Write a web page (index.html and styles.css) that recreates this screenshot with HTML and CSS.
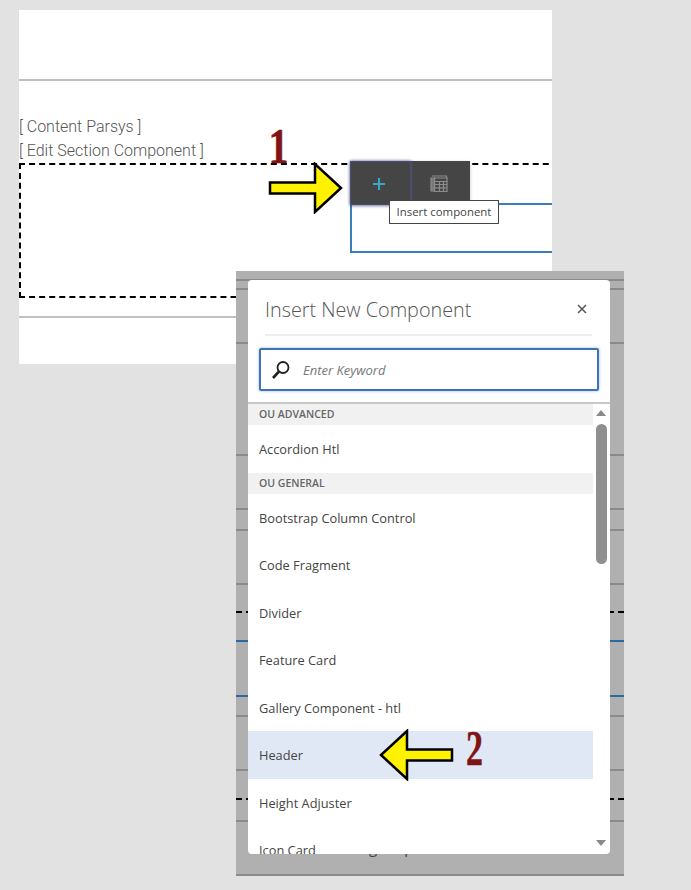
FILE: index.html
```html
<!DOCTYPE html>
<html lang="en">
<head>
<meta charset="utf-8">
<title>Insert New Component</title>
<link rel="stylesheet" href="styles.css">
</head>
<body>
<main class="card">
  <hr class="rule rule-top">
  <p class="label">[ Content Parsys ]</p>
  <p class="label">[ Edit Section Component ]</p>
  <section class="dropzone"><div class="placeholder"></div></section>
  <hr class="rule rule-bottom">
</main>

<div class="toolbar">
  <button class="tool tool-active" aria-label="Insert component">
    <svg width="14" height="14" viewBox="0 0 14 14"><path d="M7 1v12M1 7h12" stroke="#3aa6c8" stroke-width="2" fill="none"/></svg>
  </button>
  <button class="tool" aria-label="Table">
    <svg width="18" height="18" viewBox="0 0 18 18" fill="none" stroke="#8c8c8c" stroke-width="1.2"><path d="M1 3h3.500v13H1z" fill="#777"/><path d="M2 1h14.500v2"/><path d="M4.500 3h12.500v13.500H4.500zM4.500 6.500h12.500M4.500 9.500h12.500M4.500 12.800h12.500M9.500 6.500v10M13.500 6.500v10"/></svg>
  </button>
</div>
<div class="tooltip">Insert component</div>

<div class="overlay">
  <div class="back"></div><div class="back"></div><div class="back"></div><div class="back"></div>
  <div class="back"></div><div class="back"></div><div class="back"></div>
  <div class="back dash"></div><div class="back blue"></div><div class="back blue"></div>
  <div class="back"></div><div class="back"></div><div class="back dash"></div>
  <div class="back"></div><div class="back"></div>
  <span class="behind">Heading Help</span>
  <div class="dialog">
    <header class="dialog-head">
      <h1 class="title">Insert New Component</h1>
      <svg class="close" width="10" height="10" viewBox="0 0 10 10"><path d="M1 1l8 8M9 1l-8 8" stroke="#555" stroke-width="1.500" fill="none"/></svg>
    </header>
    <div class="search">
      <svg width="20" height="20" viewBox="0 0 20 20" fill="none" stroke="#222"><circle cx="12" cy="7.500" r="5.500" stroke-width="1.800"/><path d="M8 11.500l-6 6.500" stroke-width="2.600"/></svg>
      <span class="placeholder-text">Enter Keyword</span>
    </div>
    <div class="body">
      <ul class="list">
        <li class="group">OU ADVANCED</li>
        <li class="item">Accordion Htl</li>
        <li class="group">OU GENERAL</li>
        <li class="item">Bootstrap Column Control</li>
        <li class="item">Code Fragment</li>
        <li class="item">Divider</li>
        <li class="item">Feature Card</li>
        <li class="item">Gallery Component - htl</li>
        <li class="item selected">Header</li>
        <li class="item">Height Adjuster</li>
        <li class="item">Icon Card</li>
      </ul>
      <div class="scrollbar">
        <span class="arrow-up"></span>
        <span class="thumb"></span>
        <span class="arrow-down"></span>
      </div>
    </div>
  </div>
</div>

<span class="num num-one">1</span>
<svg class="callout callout-one" width="76" height="52" viewBox="0 0 76 52"><path d="M2 20.500H47V2L73 26 47 50V31.500H2Z" fill="#fff200" stroke="#000" stroke-width="2.500"/></svg>
<svg class="callout callout-two" width="76" height="52" viewBox="0 0 76 52"><path d="M74 20.500H29V2L3 26 29 50V31.500H74Z" fill="#fff200" stroke="#000" stroke-width="2.500"/></svg>
<span class="num num-two">2</span>
</body>
</html>
```
FILE: styles.css
```css
* { box-sizing: border-box; }
html, body { height: 100%; }
body {
  margin: 0;
  padding: 10px 0 0 19px;
  background: #e2e2e2;
  overflow: hidden;
  position: relative;
  font-family: "Open Sans", "Noto Sans", sans-serif;
}
.card {
  width: 533px;
  height: 354px;
  padding-top: 69px;
  background: #fff;
  overflow: hidden;
}
.rule { margin: 0; border: 0; height: 2px; background: #c0c0c0; }
.rule-top { margin-bottom: 34px; }
.rule-bottom { margin-top: 18px; }
.label {
  margin: 0;
  font: 300 16px/24px Roboto, sans-serif;
  color: #555;
}
.dropzone {
  width: 560px;
  height: 135px;
  padding: 38px 0 0 329px;
  border: 2px dashed #000;
}
.placeholder {
  width: 300px;
  height: 50px;
  border: 2px solid #3b7db8;
}

.toolbar {
  position: absolute;
  left: 350px;
  top: 161px;
  display: flex;
  width: 120px;
  height: 44px;
  background: #454545;
  box-shadow: 0 1px 3px rgba(0,0,0,.25);
}
.tool {
  flex: 1;
  display: flex;
  align-items: center;
  justify-content: center;
  padding: 2px 3px 0 0;
  background: none;
  border: 0;
}
.tool-active { border: 1px solid #4c4c78; box-shadow: 0 0 3px #5a5a96; }
.tooltip {
  position: absolute;
  left: 389px;
  top: 200px;
  width: 110px;
  height: 24px;
  border: 1px solid #444;
  background: #fff;
  color: #444;
  font-size: 11.400px;
  line-height: 22px;
  text-align: center;
}

.overlay {
  position: absolute;
  left: 236px;
  top: 271px;
  width: 388px;
  height: 605px;
  background: #b0b0b0;
  display: grid;
  grid-template-rows: 10px 9px 54px 112px 54px 21px 54px 28px 29px 55px 20px 54px 29px 22px 54px;
}
.back { border-bottom: 2px solid #8a8a8a; }
.dash { border-bottom: 2px dashed #000; }
.blue { border-bottom: 2px solid #2a69a5; }
.behind {
  position: absolute;
  left: 83px;
  top: 566px;
  font-size: 15px;
  color: #444;
  white-space: nowrap;
}
.dialog {
  position: absolute;
  left: 12px;
  top: 9px;
  width: 362px;
  height: 574px;
  background: #fff;
  border-radius: 4px;
  overflow: hidden;
  display: flex;
  flex-direction: column;
}
.dialog-head {
  display: flex;
  align-items: center;
  justify-content: space-between;
  height: 56px;
  margin: 0 18px 0 17px;
  padding: 4px 5px 0 0;
  border-bottom: 2px solid #eeeeee;
}
.title {
  margin: 0;
  font-size: 19.800px;
  font-weight: 300;
  color: #555;
}
.search {
  display: flex;
  align-items: center;
  gap: 12px;
  height: 43px;
  margin: 12px 11px 11px 11px;
  padding-left: 10px;
  border: 2px solid #3f72b5;
  border-radius: 2px;
  box-shadow: 0 0 3px rgba(63,114,181,.5);
}
.placeholder-text {
  font-size: 13px;
  font-style: italic;
  color: #777;
}
.body {
  display: flex;
  flex: 1;
  min-height: 0;
  border-top: 2px solid #c8c8c8;
}
.list {
  flex: 0 0 345px;
  margin: 0;
  padding: 0;
  list-style: none;
  color: #444;
}
.group {
  height: 21px;
  padding-left: 11px;
  background: #f1f1f1;
  font-size: 10.500px;
  font-weight: 600;
  line-height: 20px;
  color: #666;
}
.item {
  height: 47.500px;
  padding: 1px 0 0 11px;
  font-size: 12.800px;
  line-height: 47.500px;
}
.selected { background: #e0e8f6; }
.scrollbar {
  flex: 1;
  position: relative;
  display: flex;
  flex-direction: column;
  align-items: center;
  padding: 6px 1px 0 0;
}
.arrow-up {
  border: 5px solid transparent;
  border-top: 0;
  border-bottom: 6px solid #8a8a8a;
}
.thumb {
  width: 11px;
  height: 140px;
  margin-top: 8px;
  border-radius: 6px;
  background: #8f8f8f;
}
.arrow-down {
  margin-top: auto;
  margin-bottom: 8px;
  border: 5px solid transparent;
  border-bottom: 0;
  border-top: 6px solid #8a8a8a;
}

.num {
  position: absolute;
  font: 700 50px/50px "Liberation Serif", serif;
  color: #7f1416;
  -webkit-text-stroke: .5px #7f1416;
}
.num-one { left: 266px; top: 121px; transform: scaleX(.8); }
.num-two { left: 462px; top: 723px; transform: scaleX(.68); }
.callout { position: absolute; }
.callout-one { left: 268px; top: 162px; }
.callout-two { left: 378px; top: 729px; }
```
